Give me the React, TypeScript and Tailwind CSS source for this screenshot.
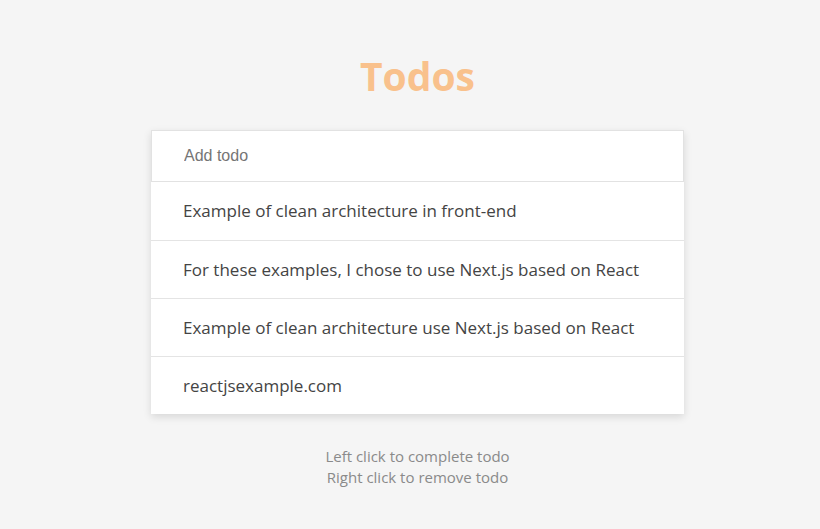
const todos = [
  "Example of clean architecture in front-end",
  "For these examples, I chose to use Next.js based on React",
  "Example of clean architecture use Next.js based on React",
  "reactjsexample.com",
];

export default function App() {
  return (
    <div className="min-h-[529px] bg-[#f5f5f5] pt-[56px] pl-[15px] font-['Open_Sans',sans-serif]">
      <h1 className="text-center text-[39px] font-bold leading-10 text-[#f9c18c]">Todos</h1>

      <div className="mx-auto mt-[34px] w-[533px] shadow-[0_3px_8px_rgba(0,0,0,0.12)]">
        <input
          type="text"
          placeholder="Add todo"
          className="block h-[52px] w-full border border-[#e2e2e2] bg-white px-8 font-['Liberation_Sans',sans-serif] text-base text-[#444] outline-none placeholder:text-[#757575]"
        />
        <ul>
          {todos.map((todo, i) => (
            <li
              key={i}
              className={
                "flex h-[58px] items-center bg-white px-8 text-[17px] text-[#444] " +
                (i > 0 ? "border-t border-[#e4e4e4]" : "")
              }
            >
              {todo}
            </li>
          ))}
        </ul>
      </div>

      <div className="mt-[32px] text-center text-[15px] leading-[21px] text-[#8a8a8a]">
        <p>Left click to complete todo</p>
        <p>Right click to remove todo</p>
      </div>
    </div>
  );
}
